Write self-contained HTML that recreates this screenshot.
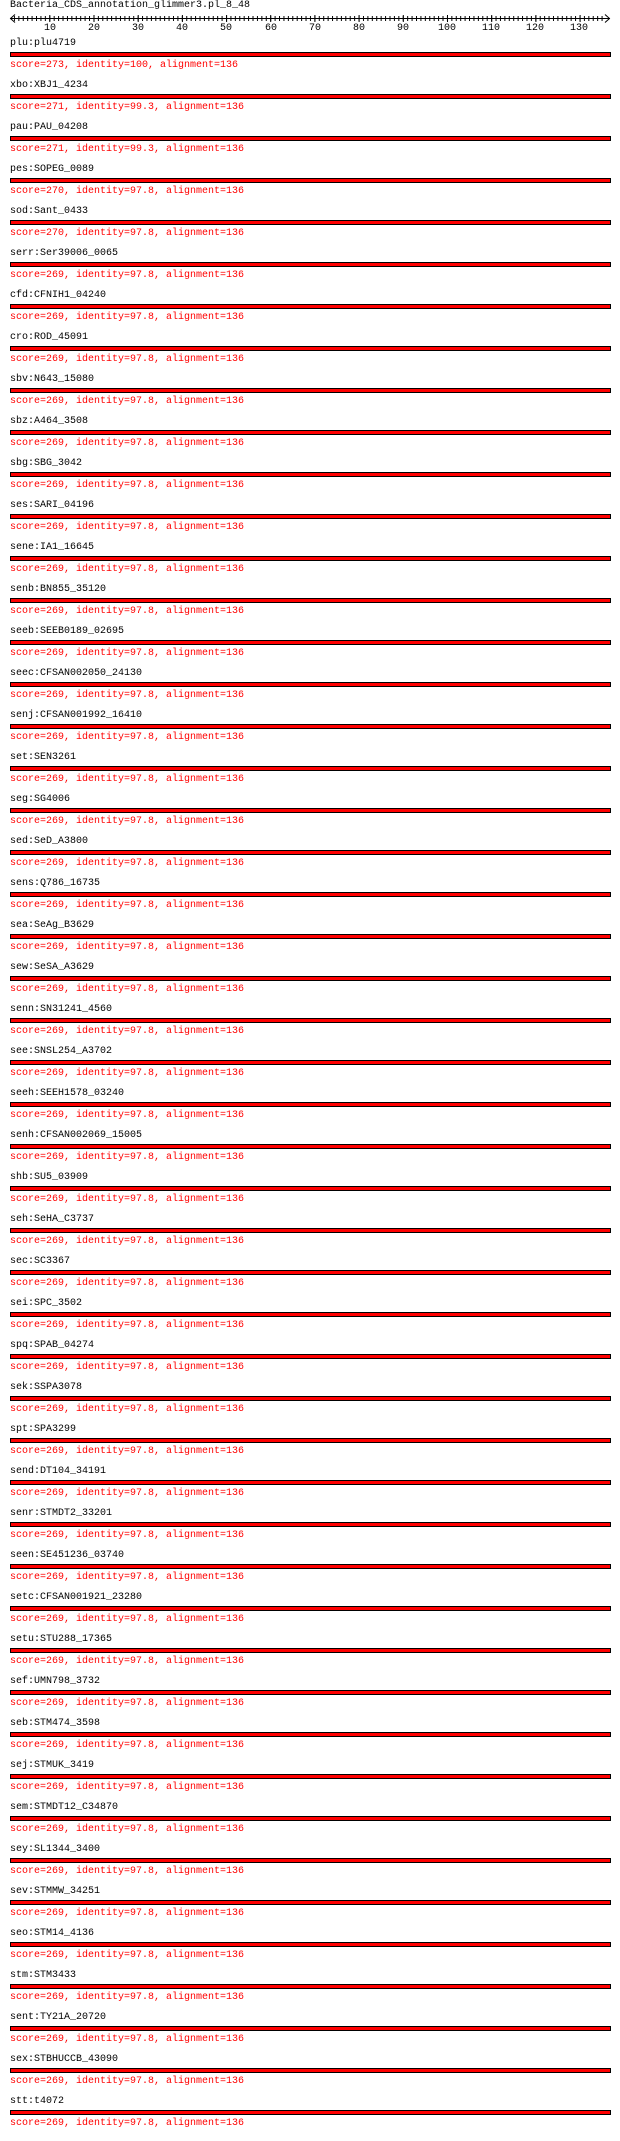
<!DOCTYPE html>
<html><head><meta charset="utf-8"><style>
html,body{margin:0;padding:0;background:#fff;width:620px;height:2141px;overflow:hidden}
body{font-family:"Liberation Mono",monospace;font-size:10px;line-height:12px;color:#000;position:relative}
.t{position:absolute;left:10px;top:0px;white-space:pre}
svg{position:absolute;left:0;top:0}
.rows{position:absolute;left:0;top:33px;width:620px}
.r{height:42px;position:relative}
.l{position:absolute;left:10px;top:5px;white-space:pre}
.b{position:absolute;left:10px;top:52px;margin-top:-33px;width:599px;height:3px;background:#f00;border:1px solid #000}
.s{position:absolute;left:10px;top:27px;color:#f00;white-space:pre}
</style></head><body>
<div class="t">Bacteria_CDS_annotation_glimmer3.pl_8_48</div>
<svg width="620" height="34">
<defs><pattern id="tk" patternUnits="userSpaceOnUse" x="9.5" y="0" width="4.4185" height="34"><rect x="0" y="16" width="1" height="5" fill="#000"/></pattern></defs>
<rect x="14" y="16" width="592" height="5" fill="url(#tk)"/>
<rect x="10" y="18" width="600" height="1" fill="#000"/>
<path d="M15 14.5 L10.5 18.5 L15 22.5 M605 14.5 L609.5 18.5 L605 22.5" stroke="#000" fill="none"/>
<g fill="#000">
<rect x="49.3" y="15" width="1" height="7"/><rect x="93.5" y="15" width="1" height="7"/><rect x="137.7" y="15" width="1" height="7"/><rect x="181.9" y="15" width="1" height="7"/><rect x="226.1" y="15" width="1" height="7"/><rect x="270.2" y="15" width="1" height="7"/><rect x="314.4" y="15" width="1" height="7"/><rect x="358.6" y="15" width="1" height="7"/><rect x="402.8" y="15" width="1" height="7"/><rect x="447" y="15" width="1" height="7"/><rect x="491.2" y="15" width="1" height="7"/><rect x="535.4" y="15" width="1" height="7"/><rect x="579.6" y="15" width="1" height="7"/>
</g>
<g font-family="Liberation Mono, monospace" font-size="10" text-anchor="middle" fill="#000">
<text x="50" y="30">10</text><text x="94" y="30">20</text><text x="138" y="30">30</text><text x="182" y="30">40</text><text x="226" y="30">50</text><text x="271" y="30">60</text><text x="315" y="30">70</text><text x="359" y="30">80</text><text x="403" y="30">90</text><text x="447" y="30">100</text><text x="491" y="30">110</text><text x="535" y="30">120</text><text x="579" y="30">130</text>
</g>
</svg>
<div class="rows">
<div class="r"><div class="l">plu:plu4719</div><div class="b"></div><div class="s">score=273, identity=100, alignment=136</div></div>
<div class="r"><div class="l">xbo:XBJ1_4234</div><div class="b"></div><div class="s">score=271, identity=99.3, alignment=136</div></div>
<div class="r"><div class="l">pau:PAU_04208</div><div class="b"></div><div class="s">score=271, identity=99.3, alignment=136</div></div>
<div class="r"><div class="l">pes:SOPEG_0089</div><div class="b"></div><div class="s">score=270, identity=97.8, alignment=136</div></div>
<div class="r"><div class="l">sod:Sant_0433</div><div class="b"></div><div class="s">score=270, identity=97.8, alignment=136</div></div>
<div class="r"><div class="l">serr:Ser39006_0065</div><div class="b"></div><div class="s">score=269, identity=97.8, alignment=136</div></div>
<div class="r"><div class="l">cfd:CFNIH1_04240</div><div class="b"></div><div class="s">score=269, identity=97.8, alignment=136</div></div>
<div class="r"><div class="l">cro:ROD_45091</div><div class="b"></div><div class="s">score=269, identity=97.8, alignment=136</div></div>
<div class="r"><div class="l">sbv:N643_15080</div><div class="b"></div><div class="s">score=269, identity=97.8, alignment=136</div></div>
<div class="r"><div class="l">sbz:A464_3508</div><div class="b"></div><div class="s">score=269, identity=97.8, alignment=136</div></div>
<div class="r"><div class="l">sbg:SBG_3042</div><div class="b"></div><div class="s">score=269, identity=97.8, alignment=136</div></div>
<div class="r"><div class="l">ses:SARI_04196</div><div class="b"></div><div class="s">score=269, identity=97.8, alignment=136</div></div>
<div class="r"><div class="l">sene:IA1_16645</div><div class="b"></div><div class="s">score=269, identity=97.8, alignment=136</div></div>
<div class="r"><div class="l">senb:BN855_35120</div><div class="b"></div><div class="s">score=269, identity=97.8, alignment=136</div></div>
<div class="r"><div class="l">seeb:SEEB0189_02695</div><div class="b"></div><div class="s">score=269, identity=97.8, alignment=136</div></div>
<div class="r"><div class="l">seec:CFSAN002050_24130</div><div class="b"></div><div class="s">score=269, identity=97.8, alignment=136</div></div>
<div class="r"><div class="l">senj:CFSAN001992_16410</div><div class="b"></div><div class="s">score=269, identity=97.8, alignment=136</div></div>
<div class="r"><div class="l">set:SEN3261</div><div class="b"></div><div class="s">score=269, identity=97.8, alignment=136</div></div>
<div class="r"><div class="l">seg:SG4006</div><div class="b"></div><div class="s">score=269, identity=97.8, alignment=136</div></div>
<div class="r"><div class="l">sed:SeD_A3800</div><div class="b"></div><div class="s">score=269, identity=97.8, alignment=136</div></div>
<div class="r"><div class="l">sens:Q786_16735</div><div class="b"></div><div class="s">score=269, identity=97.8, alignment=136</div></div>
<div class="r"><div class="l">sea:SeAg_B3629</div><div class="b"></div><div class="s">score=269, identity=97.8, alignment=136</div></div>
<div class="r"><div class="l">sew:SeSA_A3629</div><div class="b"></div><div class="s">score=269, identity=97.8, alignment=136</div></div>
<div class="r"><div class="l">senn:SN31241_4560</div><div class="b"></div><div class="s">score=269, identity=97.8, alignment=136</div></div>
<div class="r"><div class="l">see:SNSL254_A3702</div><div class="b"></div><div class="s">score=269, identity=97.8, alignment=136</div></div>
<div class="r"><div class="l">seeh:SEEH1578_03240</div><div class="b"></div><div class="s">score=269, identity=97.8, alignment=136</div></div>
<div class="r"><div class="l">senh:CFSAN002069_15005</div><div class="b"></div><div class="s">score=269, identity=97.8, alignment=136</div></div>
<div class="r"><div class="l">shb:SU5_03909</div><div class="b"></div><div class="s">score=269, identity=97.8, alignment=136</div></div>
<div class="r"><div class="l">seh:SeHA_C3737</div><div class="b"></div><div class="s">score=269, identity=97.8, alignment=136</div></div>
<div class="r"><div class="l">sec:SC3367</div><div class="b"></div><div class="s">score=269, identity=97.8, alignment=136</div></div>
<div class="r"><div class="l">sei:SPC_3502</div><div class="b"></div><div class="s">score=269, identity=97.8, alignment=136</div></div>
<div class="r"><div class="l">spq:SPAB_04274</div><div class="b"></div><div class="s">score=269, identity=97.8, alignment=136</div></div>
<div class="r"><div class="l">sek:SSPA3078</div><div class="b"></div><div class="s">score=269, identity=97.8, alignment=136</div></div>
<div class="r"><div class="l">spt:SPA3299</div><div class="b"></div><div class="s">score=269, identity=97.8, alignment=136</div></div>
<div class="r"><div class="l">send:DT104_34191</div><div class="b"></div><div class="s">score=269, identity=97.8, alignment=136</div></div>
<div class="r"><div class="l">senr:STMDT2_33201</div><div class="b"></div><div class="s">score=269, identity=97.8, alignment=136</div></div>
<div class="r"><div class="l">seen:SE451236_03740</div><div class="b"></div><div class="s">score=269, identity=97.8, alignment=136</div></div>
<div class="r"><div class="l">setc:CFSAN001921_23280</div><div class="b"></div><div class="s">score=269, identity=97.8, alignment=136</div></div>
<div class="r"><div class="l">setu:STU288_17365</div><div class="b"></div><div class="s">score=269, identity=97.8, alignment=136</div></div>
<div class="r"><div class="l">sef:UMN798_3732</div><div class="b"></div><div class="s">score=269, identity=97.8, alignment=136</div></div>
<div class="r"><div class="l">seb:STM474_3598</div><div class="b"></div><div class="s">score=269, identity=97.8, alignment=136</div></div>
<div class="r"><div class="l">sej:STMUK_3419</div><div class="b"></div><div class="s">score=269, identity=97.8, alignment=136</div></div>
<div class="r"><div class="l">sem:STMDT12_C34870</div><div class="b"></div><div class="s">score=269, identity=97.8, alignment=136</div></div>
<div class="r"><div class="l">sey:SL1344_3400</div><div class="b"></div><div class="s">score=269, identity=97.8, alignment=136</div></div>
<div class="r"><div class="l">sev:STMMW_34251</div><div class="b"></div><div class="s">score=269, identity=97.8, alignment=136</div></div>
<div class="r"><div class="l">seo:STM14_4136</div><div class="b"></div><div class="s">score=269, identity=97.8, alignment=136</div></div>
<div class="r"><div class="l">stm:STM3433</div><div class="b"></div><div class="s">score=269, identity=97.8, alignment=136</div></div>
<div class="r"><div class="l">sent:TY21A_20720</div><div class="b"></div><div class="s">score=269, identity=97.8, alignment=136</div></div>
<div class="r"><div class="l">sex:STBHUCCB_43090</div><div class="b"></div><div class="s">score=269, identity=97.8, alignment=136</div></div>
<div class="r"><div class="l">stt:t4072</div><div class="b"></div><div class="s">score=269, identity=97.8, alignment=136</div></div>
</div>
</body></html>
